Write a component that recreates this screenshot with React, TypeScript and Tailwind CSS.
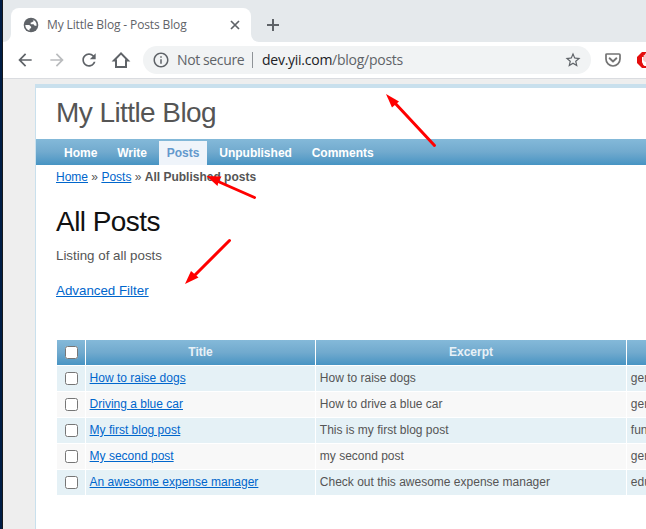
import React from 'react';

const menu = ['Home', 'Write', 'Posts', 'Unpublished', 'Comments'];

const rows = [
  ['How to raise dogs', 'How to raise dogs', 'general'],
  ['Driving a blue car', 'How to drive a blue car', 'general'],
  ['My first blog post', 'This is my first blog post', 'fun'],
  ['My second post', 'my second post', 'general'],
  ['An awesome expense manager', 'Check out this awesome expense manager', 'education'],
];

function Icon({ d, className }: { d: string; className: string }) {
  return (
    <svg viewBox="0 0 24 24" className={`shrink-0 ${className}`} fill="currentColor">
      <path d={d} />
    </svg>
  );
}

const BACK = 'M20 11H7.83l5.59-5.59L12 4l-8 8 8 8 1.41-1.41L7.83 13H20v-2z';
const FORWARD = 'M12 4l-1.41 1.41L16.17 11H4v2h12.17l-5.58 5.59L12 20l8-8z';
const RELOAD =
  'M17.65 6.35C16.2 4.9 14.21 4 12 4c-4.42 0-7.99 3.58-7.99 8s3.57 8 7.99 8c3.73 0 6.84-2.55 7.73-6h-2.08c-.82 2.33-3.04 4-5.65 4-3.31 0-6-2.69-6-6s2.69-6 6-6c1.66 0 3.14.69 4.22 1.78L13 11h7V4l-2.35 2.35z';
const INFO =
  'M11 7h2v2h-2zm0 4h2v6h-2zm1-9C6.48 2 2 6.48 2 12s4.48 10 10 10 10-4.48 10-10S17.52 2 12 2zm0 18c-4.41 0-8-3.59-8-8s3.59-8 8-8 8 3.59 8 8-3.59 8-8 8z';
const STAR =
  'M22 9.24l-7.19-.62L12 2 9.19 8.63 2 9.24l5.46 4.73L5.82 21 12 17.27 18.18 21l-1.63-7.03L22 9.24zM12 15.4l-3.76 2.27 1-4.28-3.32-2.88 4.38-.38L12 6.1l1.71 4.04 4.38.38-3.32 2.88 1 4.28L12 15.4z';

function TabStrip() {
  return (
    <div className="flex h-[42px] bg-[#e5e9ec] pt-2">
      <svg className="h-2 w-2 shrink-0 self-end" viewBox="0 0 8 8">
        <path d="M8 0v8H0a8 8 0 0 0 8-8z" fill="#fff" />
      </svg>
      <div className="flex h-[34px] w-[240px] shrink-0 items-center rounded-t-lg bg-white pr-2 pl-3">
        <svg viewBox="0 0 16 16" className="size-4 shrink-0">
          <circle cx="8" cy="8" r="7.3" fill="#5f6368" />
          <path d="M2.3 8h3.9l1.900 1.700v1.300L6.500 12v1.700A6 6 0 0 1 2.300 8z" fill="#fff" />
          <path d="M8.700 2.300l1.800.4v1.600L9 5.200l-1.500.5.300 1.500h2.700l1.200 1.500 1.900.1A6 6 0 0 0 8.700 2.300z" fill="#fff" />
        </svg>
        <span className="ml-2 whitespace-nowrap font-['Open_Sans',sans-serif] text-[12px] tracking-[-0.13px] text-[#5f6368]">
          My Little Blog - Posts Blog
        </span>
        <svg viewBox="0 0 16 16" className="ml-auto size-4 shrink-0">
          <path d="M4 4l8 8M12 4l-8 8" stroke="#5f6368" strokeWidth="1.7" />
        </svg>
      </div>
      <svg className="h-2 w-2 shrink-0 self-end" viewBox="0 0 8 8">
        <path d="M0 0v8h8a8 8 0 0 1-8-8z" fill="#fff" />
      </svg>
      <svg viewBox="0 0 12 12" className="mt-[11px] ml-2 size-3 shrink-0">
        <path d="M6 0v12M0 6h12" stroke="#5f6368" strokeWidth="2" />
      </svg>
    </div>
  );
}

function Toolbar() {
  return (
    <div className="flex h-[37px] items-center border-b border-[#dadce0] bg-white pl-3">
      <Icon d={BACK} className="size-5 text-[#5f6368]" />
      <Icon d={FORWARD} className="ml-3 size-5 text-[#babcbe]" />
      <Icon d={RELOAD} className="ml-3 size-5 text-[#5f6368]" />
      <svg viewBox="0 0 20 20" className="ml-3 size-5 shrink-0" fill="none" stroke="#5f6368" strokeWidth="2">
        <path d="M3 10.500L10 3.400l7 7.100h-2v6.500H5v-6.500z" />
      </svg>
      <div className="ml-3 flex h-7 w-[448px] shrink-0 items-center rounded-full bg-[#f1f3f4] pr-[9px] pl-[9px] font-['Open_Sans',sans-serif] text-[14px] text-[#5f6368]">
        <Icon d={INFO} className="size-[18px]" />
        <span className="ml-[7px] w-[68px] -translate-y-px whitespace-nowrap tracking-[-0.38px]">Not secure</span>
        <span className="ml-[7px] h-4 w-px bg-[#8f9397]" />
        <span className="ml-[9px] -translate-y-px whitespace-nowrap tracking-[-0.26px]">
          <span className="text-[#202124]">dev.yii.com</span>/blog/posts
        </span>
        <Icon d={STAR} className="ml-auto size-[18px]" />
      </div>
      <svg viewBox="0 0 16 14" className="ml-[14px] h-[14px] w-4 shrink-0" fill="none" stroke="#737373">
        <path d="M1.900 1h12.200q.9 0 .9.9V6a7 7 0 0 1-14 0V1.900Q1 1 1.900 1z" strokeWidth="1.700" />
        <path d="M4.600 5.300L8 8.500l3.400-3.200" strokeWidth="1.900" strokeLinecap="round" strokeLinejoin="round" />
      </svg>
      <svg viewBox="0 0 16 16" className="ml-4 size-4 shrink-0">
        <path d="M5 0h6l5 5v6l-5 5H5l-5-5V5z" fill="#e40d0d" />
        <path d="M5.500 5q.7-.7 1.200 0V3q.7-.7 1.300 0V1.500h3V14H8q-2-1-2.500-4z" fill="#f8c9c9" />
        <path d="M5 5v5q.8 3 3 4h3v-4H8L6 8V5z" fill="#fff" />
      </svg>
    </div>
  );
}

function Checkbox() {
  return <input type="checkbox" className="block size-[13px]" />;
}

function PostsTable() {
  const head = 'bg-linear-to-b from-[#84b9d9] via-[#71aace] to-[#4794c3] font-bold text-[#e8f1f7] text-center';
  const grid = 'grid grid-cols-[28px_229px_310px_120px] gap-x-px text-[12px] leading-[25px]';
  return (
    <div className="mt-[39px] ml-[21px] flex w-[690px] flex-col gap-px whitespace-nowrap">
      <div className={grid}>
        <div className={`${head} flex justify-center pt-[6px] pl-px`}>
          <Checkbox />
        </div>
        <div className={head}>Title</div>
        <div className={head}>Excerpt</div>
        <div className={head} />
      </div>
      {rows.map(([title, excerpt, tag], i) => {
        const tone = i % 2 ? 'bg-[#f8f8f8]' : 'bg-[#e5f1f6]';
        return (
          <div key={title} className={grid}>
            <div className={`${tone} flex justify-center pt-[6px] pl-px`}>
              <Checkbox />
            </div>
            <div className={`${tone} pl-[3.6px]`}>
              <a href="#" className="text-[#0066cc] underline">{title}</a>
            </div>
            <div className={`${tone} pl-[3.8px]`}>{excerpt}</div>
            <div className={`${tone} pl-[3.8px]`}>{tag}</div>
          </div>
        );
      })}
    </div>
  );
}

function BlogPage() {
  return (
    <div className="flex-1 bg-[#eee] pt-[5px] pl-8">
      <div className="h-full border-t-4 border-l border-[#c9e0ed] bg-white font-['Liberation_Sans',Arial,sans-serif] text-[13.33px] text-[#555]">
        <div className="h-[51px] pl-5 text-[28px] leading-[49px] tracking-[-0.57px]">My Little Blog</div>
        <nav className="flex h-[26px] gap-[3.8px] bg-linear-to-b from-[#84b9d9] via-[#71aace] to-[#4794c3] pt-[2px] pl-5 text-[12px] leading-6 font-bold">
          {menu.map((item) => (
            <a
              key={item}
              href="#"
              className={item === 'Posts' ? 'bg-[#eff4fa] px-2 text-[#6399cd]' : 'px-2 text-white'}
            >
              {item}
            </a>
          ))}
        </nav>
        <div className="h-6 pl-5 text-[12px] leading-6">
          <a href="#" className="text-[#0066cc] underline">Home</a> »{' '}
          <a href="#" className="text-[#0066cc] underline">Posts</a> » <b>All Published posts</b>
        </div>
        <h1 className="mt-[17px] pl-5 text-[28px] leading-8 tracking-[-0.55px] text-[#111]">All Posts</h1>
        <p className="mt-2 pl-5 leading-5">Listing of all posts</p>
        <p className="mt-[15px] pl-5 leading-5">
          <a href="#" className="text-[#0066cc] underline">Advanced Filter</a>
        </p>
        <PostsTable />
      </div>
    </div>
  );
}

function Annotations() {
  return (
    <svg className="pointer-events-none absolute inset-0" width="646" height="529" fill="#f00" stroke="#f00">
      <g strokeWidth="3" strokeLinecap="round">
        <path d="M434.5 145.5L394 102" />
        <path d="M254.500 197.500L217 181" />
        <path d="M229.500 240.500L194 276" />
      </g>
      <g stroke="none">
        <path d="M386 94l13 7.500-3.500 3-3.500 3z" />
        <path d="M206.500 176l15 .5-3 5-1 4.500z" />
        <path d="M185 284l6-13 3.500 3 4 3.500z" />
      </g>
    </svg>
  );
}

export default function App() {
  return (
    <div className="relative flex h-[529px] w-[646px] overflow-hidden bg-white">
      <div className="w-[3px] shrink-0 border-r border-[#17191c] bg-[#001d46]" />
      <div className="flex w-[643px] shrink-0 flex-col overflow-hidden">
        <TabStrip />
        <Toolbar />
        <BlogPage />
      </div>
      <Annotations />
    </div>
  );
}
